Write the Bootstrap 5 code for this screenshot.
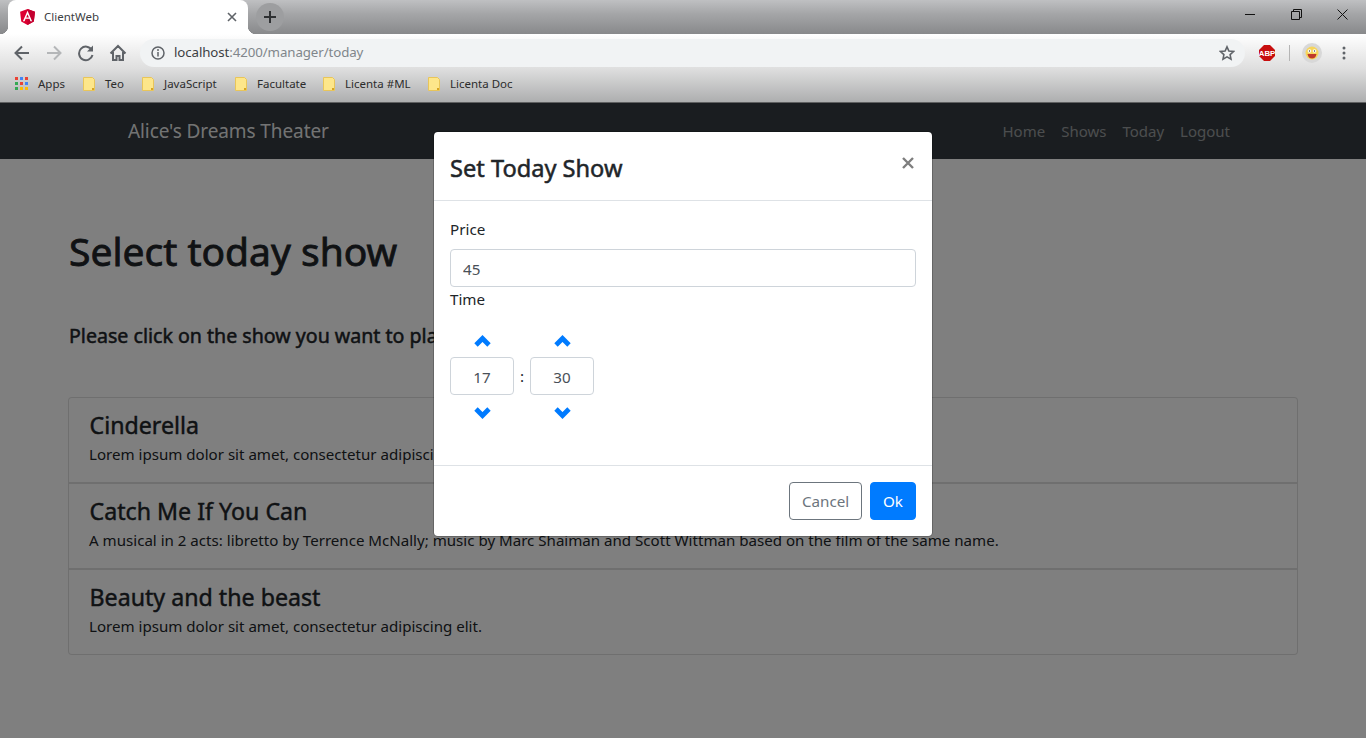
<!DOCTYPE html>
<html lang="en"><head><meta charset="utf-8"><title>ClientWeb</title>
<link rel="stylesheet" href="https://cdn.jsdelivr.net/npm/bootstrap@5.3.0/dist/css/bootstrap.min.css">
<style>
:root{--ui:"Noto Sans","Open Sans","Liberation Sans",sans-serif}
html,body{height:100%;overflow:hidden}
body{font-family:var(--ui);background:#fff;color:#212529;font-size:16px}
.shell{height:738px}
.tabstrip{height:34px;background:linear-gradient(#bfc0c2,#a5a6a8 40%,#88898b)}
.tabitem{width:240px;height:34px;margin-left:8px;background:#fff;border-radius:8px 8px 0 0;padding:0 11px 0 12px;font-size:11.5px;color:#3c4043;position:relative}
.tabitem::before,.tabitem::after{content:"";position:absolute;bottom:0;width:8px;height:8px}
.tabitem::before{left:-8px;background:radial-gradient(circle at 0 0,transparent 8px,#fff 8.5px)}
.tabitem::after{right:-8px;background:radial-gradient(circle at 100% 0,transparent 8px,#fff 8.5px)}
.tabname{margin-left:9px}
.tabclose{margin-left:auto;line-height:0}
.newtab{width:28px;height:28px;border-radius:50%;background:#9d9ea0;margin-left:8px;line-height:0}
.winbtns{margin-left:auto;gap:35px;padding-right:18px;margin-top:-6px}
.winbtns svg{display:block}
.toolbar{height:35px;background:linear-gradient(#fff,#dedede);padding-left:13px;padding-top:2px}
.navico{width:32px;line-height:0}
.omni{width:1105px;height:28px;margin-left:-1px;background:#f1f3f4;border-radius:14px;padding:0 10px 0 11px;font-size:13.3px;letter-spacing:-.1px;color:#80868b}
.omni b{font-weight:400;color:#3c4043}
.omnitext{margin-left:9px}
.star{margin-left:auto;line-height:0}
.ext{line-height:0}
.abp{margin-left:14px}
.sep{width:1px;height:16px;background:#b5b5b5;margin:0 12px 0 14px}
.dots{margin-left:20px}
.bookmarks{height:30px;background:linear-gradient(#dedede,#adaeaf);padding-left:15px;padding-bottom:3px;font-size:11.5px;color:#2c2c2c;border-bottom:1px solid #5f6061;box-sizing:content-box}
.bm{line-height:0;white-space:nowrap}
.bm span{line-height:16px}
.bm svg{margin-right:10px;flex:none}
.bm:nth-child(1){width:68px}.bm:nth-child(1) svg{margin-right:9px}
.bm:nth-child(2){width:59px}.bm:nth-child(3){width:93px}.bm:nth-child(4){width:88px}.bm:nth-child(5){width:105px}
.stage{height:635px;overflow:hidden}
.topbar{height:56px;background:#343a40;padding:0 136px 0 128px}
.brandname{font-size:19px;color:rgba(255,255,255,.9);letter-spacing:-.1px}
.toplinks{gap:16px;font-size:15px}
.toplinks a{color:rgba(255,255,255,.5);text-decoration:none}
.pagebody{padding:0 68px}
.bigtitle{font-size:39px;font-weight:400;-webkit-text-stroke:.8px #212529;line-height:48px;margin:68px 0 0 1px}
.subtitle{font-size:19.6px;font-weight:400;-webkit-text-stroke:.5px #212529;line-height:24px;margin:49px 0 0 1px}
.showlist{margin-top:49px;border-radius:4px}
.showlist .list-group-item{padding:13px 20px 0;height:86px;border-color:rgba(0,0,0,.125);color:#212529}
.showlist .list-group-item+.list-group-item{border-top-width:1px}
.showname{font-size:23.2px;font-weight:400;-webkit-text-stroke:.45px #212529;line-height:29px;margin:0 0 2px .5px}
.showtext{font-size:15.1px;line-height:24px;margin:0}
.stage .modal-backdrop{position:absolute;z-index:10;width:100%;height:100%}
.stage .modal{position:absolute;display:block;z-index:20;height:100%;overflow:hidden}
.stage .modal-dialog{max-width:500px;margin:28px auto}
.stage .modal-content{border:1px solid rgba(0,0,0,.2);border-radius:4.8px}
.stage .modal-header{padding:16px;height:69px;border-bottom:1px solid #dee2e6;border-radius:0}
.stage .modal-title{font-size:23.6px;font-weight:400;-webkit-text-stroke:.5px #212529;line-height:36px;margin:3px 0 0}
.closex{border:0;background:none;padding:0;margin-left:auto;line-height:0;opacity:.5;margin-right:2px;margin-top:-6px}
.stage .modal-body{padding:16px;height:264px;font-size:15.2px}
.fieldlabel{line-height:24px;margin-bottom:8px;display:block}
.pricebox,.timebox{border:1px solid #ced4da;height:38px;border-radius:4px;color:#495057;font-size:15.2px;font-family:var(--ui);box-shadow:none}
.pricebox{padding:7px 12px 5px}
.timecol{width:64px}
.timebox{padding:7px 4px 5px;text-align:center}
.arrowbtn{height:38px;line-height:0;padding-top:5px}
.arrowbtn.down{padding-top:0;padding-bottom:2px}
.colon{width:16px;text-align:center;font-size:15.2px}
.stage .modal-footer{padding:16px;height:71px;border-top:1px solid #dee2e6;gap:8px}
.stage .modal-footer .btn{margin:0;height:38px;font-size:15.2px;padding:6px 12px;border-radius:4px;font-family:var(--ui)}
.cancelbtn{border:1px solid #6c757d;color:#6c757d;background:#fff;width:73px}
.okbtn{background:#007bff;border:1px solid #007bff;color:#fff;width:46px}
</style></head>
<body>
<div class="shell d-flex flex-column">
  <div class="tabstrip d-flex align-items-center">
    <div class="tabitem d-flex align-items-center">
      <svg width="15" height="16" viewBox="31 30 187 200" aria-hidden="true"><path fill="#dd0031" d="M125 30 31.9 63.2l14.2 123.1L125 230l78.9-43.7 14.2-123.1z"/><path fill="#c3002f" d="M125 30v200l78.9-43.7 14.2-123.1z"/><path fill="#fff" d="M125 52.100 66.800 182.600h21.700l11.700-29.200h49.400l11.700 29.200H182L125 52.100zm17 83.300h-34l17-40.900 17 40.900z"/></svg>
      <span class="tabname">ClientWeb</span>
      <span class="tabclose"><svg width="10" height="10" viewBox="0 0 10 10"><path d="M1 1l8 8M9 1l-8 8" stroke="#5f6368" stroke-width="1.600"/></svg></span>
    </div>
    <div class="newtab d-flex align-items-center justify-content-center"><svg width="14" height="14" viewBox="0 0 14 14"><path d="M7 1v12M1 7h12" stroke="#2f3133" stroke-width="2"/></svg></div>
    <div class="winbtns d-flex align-items-center">
      <svg width="11" height="11" viewBox="0 0 11 11"><path d="M0 5.500h10" stroke="#111"/></svg>
      <svg width="11" height="11" viewBox="0 0 11 11"><path d="M.5 2.500h8v8h-8zM2.500 2.500v-2h8v8h-2" fill="none" stroke="#111"/></svg>
      <svg width="11" height="11" viewBox="0 0 11 11"><path d="M.5.500l10 10M10.500.500l-10 10" stroke="#111"/></svg>
    </div>
  </div>
  <div class="toolbar d-flex align-items-center">
    <div class="navico"><svg width="18" height="18" viewBox="0 0 18 18"><path d="M16 9H3M9 2.500 2.500 9 9 15.500" fill="none" stroke="#5f6368" stroke-width="2"/></svg></div>
    <div class="navico"><svg width="18" height="18" viewBox="0 0 18 18"><path d="M2 9h13M9 2.500 15.500 9 9 15.500" fill="none" stroke="#b4b6b8" stroke-width="2"/></svg></div>
    <div class="navico"><svg width="18" height="18" viewBox="0 0 18 18"><path d="M14.800 6A6.800 6.800 0 1 0 15.500 11" fill="none" stroke="#5f6368" stroke-width="2"/><path d="M16 1.500V7.500H10z" fill="#5f6368"/></svg></div>
    <div class="navico"><svg width="18" height="18" viewBox="0 0 18 18"><path d="M1.500 9.500 9 2l7.500 7.500M4 8v8h3.500v-4h3v4H14V8" fill="none" stroke="#5f6368" stroke-width="2"/></svg></div>
    <div class="omni d-flex align-items-center">
      <svg width="14" height="14" viewBox="0 0 14 14"><circle cx="7" cy="7" r="6" fill="none" stroke="#5f6368" stroke-width="1.500"/><path d="M7 6v4.500" stroke="#5f6368" stroke-width="1.500"/><circle cx="7" cy="4" r="1" fill="#5f6368"/></svg>
      <span class="omnitext"><b>localhost</b>:4200/manager/today</span>
      <span class="star"><svg width="16" height="16" viewBox="0 0 16 16"><path d="M8 1.800l1.900 4.200 4.600.5-3.400 3.100.9 4.500L8 11.800l-4 2.300.9-4.500L1.500 6.500l4.600-.5z" fill="none" stroke="#5f6368" stroke-width="1.600"/></svg></span>
    </div>
    <span class="ext abp"><svg width="16" height="16" viewBox="0 0 16 16"><path d="M5 0h6l5 5v6l-5 5H5l-5-5V5z" fill="#c70d0d"/><text x="8" y="10.800" text-anchor="middle" font-family="Liberation Sans" font-weight="700" font-size="7.800" fill="#fff">ABP</text></svg></span>
    <span class="sep"></span>
    <span class="ext"><svg width="20" height="20" viewBox="0 0 20 20"><circle cx="10" cy="10" r="10" fill="#d8d8d8"/><circle cx="10" cy="10" r="6.500" fill="#f6d55c"/><circle cx="7.500" cy="8" r="1.800" fill="#fff"/><circle cx="12.500" cy="8" r="1.800" fill="#fff"/><circle cx="7.500" cy="8" r=".7" fill="#444"/><circle cx="12.500" cy="8" r=".7" fill="#444"/><path d="M5.500 11h9c-.5 3-2.200 4.500-4.500 4.500S6 14 5.500 11z" fill="#c0392b"/></svg></span>
    <span class="ext dots"><svg width="4" height="14" viewBox="0 0 4 14"><circle cx="2" cy="2" r="1.500" fill="#5f6368"/><circle cx="2" cy="7" r="1.500" fill="#5f6368"/><circle cx="2" cy="12" r="1.500" fill="#5f6368"/></svg></span>
  </div>
  <div class="bookmarks d-flex align-items-center">
    <div class="bm d-flex align-items-center"><svg width="14" height="14" viewBox="0 0 14 14"><rect x="0" y="0" width="3" height="3" fill="#ea4335"/><rect x="5" y="0" width="3" height="3" fill="#4285f4"/><rect x="10" y="0" width="3" height="3" fill="#ea4335"/><rect x="0" y="5" width="3" height="3" fill="#34a853"/><rect x="5" y="5" width="3" height="3" fill="#ea4335"/><rect x="10" y="5" width="3" height="3" fill="#4285f4"/><rect x="0" y="10" width="3" height="3" fill="#34a853"/><rect x="5" y="10" width="3" height="3" fill="#fbbc05"/><rect x="10" y="10" width="3" height="3" fill="#fbbc05"/></svg><span>Apps</span></div>
    <div class="bm d-flex align-items-center"><svg width="12" height="14" viewBox="0 0 12 14"><path d="M.5.500h9l2 2v11H.5z" fill="#fde68a" stroke="#e8c55a"/><rect x="9" y="11" width="2" height="2" fill="#d9a520"/></svg><span>Teo</span></div>
    <div class="bm d-flex align-items-center"><svg width="12" height="14" viewBox="0 0 12 14"><path d="M.5.500h9l2 2v11H.5z" fill="#fde68a" stroke="#e8c55a"/><rect x="9" y="11" width="2" height="2" fill="#d9a520"/></svg><span>JavaScript</span></div>
    <div class="bm d-flex align-items-center"><svg width="12" height="14" viewBox="0 0 12 14"><path d="M.5.500h9l2 2v11H.5z" fill="#fde68a" stroke="#e8c55a"/><rect x="9" y="11" width="2" height="2" fill="#d9a520"/></svg><span>Facultate</span></div>
    <div class="bm d-flex align-items-center"><svg width="12" height="14" viewBox="0 0 12 14"><path d="M.5.500h9l2 2v11H.5z" fill="#fde68a" stroke="#e8c55a"/><rect x="9" y="11" width="2" height="2" fill="#d9a520"/></svg><span>Licenta #ML</span></div>
    <div class="bm d-flex align-items-center"><svg width="12" height="14" viewBox="0 0 12 14"><path d="M.5.500h9l2 2v11H.5z" fill="#fde68a" stroke="#e8c55a"/><rect x="9" y="11" width="2" height="2" fill="#d9a520"/></svg><span>Licenta Doc</span></div>
  </div>
  <div class="stage position-relative">
    <nav class="topbar d-flex align-items-center justify-content-between">
      <span class="brandname">Alice's Dreams Theater</span>
      <div class="toplinks d-flex"><a href="#">Home</a><a href="#">Shows</a><a href="#">Today</a><a href="#">Logout</a></div>
    </nav>
    <main class="pagebody">
      <h1 class="bigtitle">Select today show</h1>
      <h2 class="subtitle">Please click on the show you want to play today</h2>
      <div class="list-group showlist">
        <div class="list-group-item"><h4 class="showname">Cinderella</h4><p class="showtext">Lorem ipsum dolor sit amet, consectetur adipiscing elit.</p></div>
        <div class="list-group-item"><h4 class="showname">Catch Me If You Can</h4><p class="showtext">A musical in 2 acts: libretto by Terrence McNally; music by Marc Shaiman and Scott Wittman based on the film of the same name.</p></div>
        <div class="list-group-item"><h4 class="showname">Beauty and the beast</h4><p class="showtext">Lorem ipsum dolor sit amet, consectetur adipiscing elit.</p></div>
      </div>
    </main>
    <div class="modal-backdrop show"></div>
    <div class="modal" role="dialog">
      <div class="modal-dialog">
        <div class="modal-content">
          <div class="modal-header">
            <h4 class="modal-title">Set Today Show</h4>
            <button class="closex" type="button" aria-label="Close"><svg width="12" height="12" viewBox="0 0 12 12"><path d="M1 1l10 10M11 1 1 11" stroke="#000" stroke-width="2.400"/></svg></button>
          </div>
          <div class="modal-body">
            <label class="fieldlabel">Price</label>
            <input class="form-control pricebox" value="45">
            <label class="fieldlabel">Time</label>
            <div class="d-flex">
              <div class="timecol">
                <div class="arrowbtn d-flex align-items-center justify-content-center"><svg width="17" height="12" viewBox="0 0 17 12"><path d="M2 10 8.500 3.500 15 10" fill="none" stroke="#007bff" stroke-width="4.800"/></svg></div>
                <input class="form-control timebox" value="17">
                <div class="arrowbtn down d-flex align-items-center justify-content-center"><svg width="17" height="12" viewBox="0 0 17 12"><path d="M2 2 8.500 8.500 15 2" fill="none" stroke="#007bff" stroke-width="4.800"/></svg></div>
              </div>
              <div class="colon d-flex align-items-center justify-content-center">:</div>
              <div class="timecol">
                <div class="arrowbtn d-flex align-items-center justify-content-center"><svg width="17" height="12" viewBox="0 0 17 12"><path d="M2 10 8.500 3.500 15 10" fill="none" stroke="#007bff" stroke-width="4.800"/></svg></div>
                <input class="form-control timebox" value="30">
                <div class="arrowbtn down d-flex align-items-center justify-content-center"><svg width="17" height="12" viewBox="0 0 17 12"><path d="M2 2 8.500 8.500 15 2" fill="none" stroke="#007bff" stroke-width="4.800"/></svg></div>
              </div>
            </div>
          </div>
          <div class="modal-footer">
            <button class="btn cancelbtn" type="button">Cancel</button>
            <button class="btn okbtn" type="button">Ok</button>
          </div>
        </div>
      </div>
    </div>
  </div>
</div>
<script src="https://cdn.jsdelivr.net/npm/bootstrap@5.3.0/dist/js/bootstrap.bundle.min.js"></script>
</body></html>
